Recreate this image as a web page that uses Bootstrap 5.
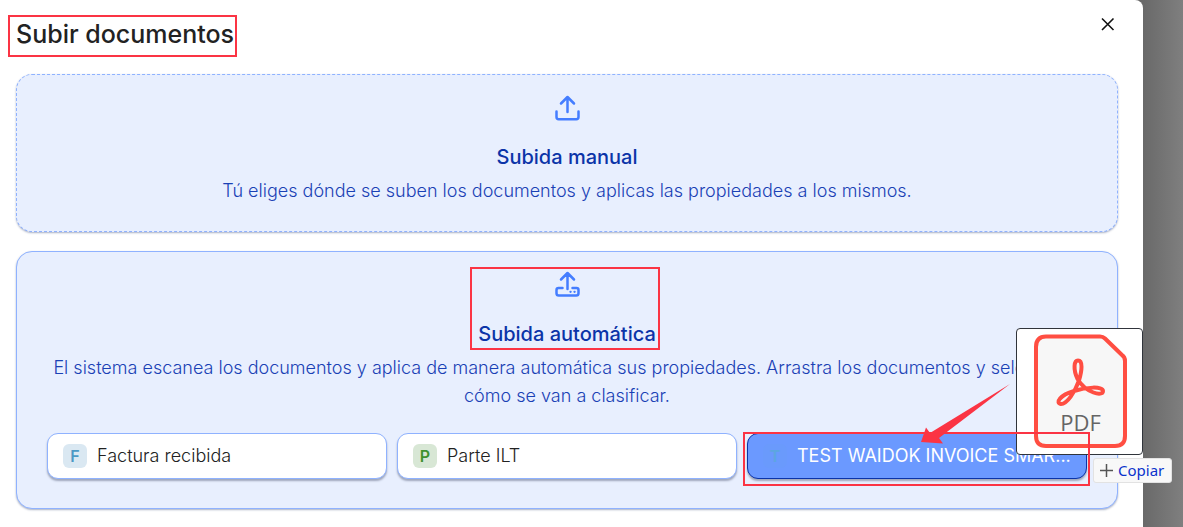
<!DOCTYPE html>
<html lang="es">
<head>
<meta charset="utf-8">
<meta name="viewport" content="width=device-width, initial-scale=1">
<title>Subir documentos</title>
<link href="https://cdn.jsdelivr.net/npm/bootstrap@5.3.0/dist/css/bootstrap.min.css" rel="stylesheet">
<style>
body { font-family: Inter, "Liberation Sans", sans-serif; background: #7e7e7e; color: #222; }
.backdrop-area { padding-right: 40px; background: linear-gradient(to left, #7f7f7f, #696969 40px); }
.dialog { background: #fff; border-top-right-radius: 8px; padding: 15px 25px 18px 16px; }
.dialog-title { font-size: 25px; line-height: 38px; font-weight: 500; margin: 0; }
.close-btn { width: 20px; height: 20px; line-height: 0; color: #111; }
.panels { gap: 19px; margin-top: 21px; }
.drop-panel { background: #e8effe; border: 1px solid #8fb2ff; border-radius: 16px; padding: 16px 30px 26px; color: #1a41b5; font-weight: 300; font-size: 18px; line-height: 28px; box-shadow: 0 1px 2px rgba(40,60,110,.4); text-align: center; }
.drop-panel.manual { border-style: dashed; }
.drop-panel.automatic { padding-bottom: 29px; }
.drop-panel h2 { font-size: 20px; line-height: 28px; font-weight: 500; color: #0b34a8; margin: 20px 0 6px; }
.drop-panel p { margin: 0; }
.panel-icon { display: block; margin: 0 auto; color: #447dff; }
.type-grid { gap: 10px; margin-top: 23px; }
.type-cell { flex: 1 1 0; min-width: 0; position: relative; }
.type-btn { width: 100%; height: 46px; background: #fff; border: 1px solid #8fb2ff; border-radius: 11px; padding: 0 15px; font-size: 18px; font-weight: 300; color: #222; box-shadow: 0 2px 2px rgba(50,60,90,.4); text-align: left; }
.type-btn.selected { background: #6b99ff; border-color: #0b34a8; color: #fff; font-weight: 400; }
.letter { flex: none; width: 24px; height: 24px; border-radius: 6px; line-height: 25px; font-size: 16px; font-weight: 600; text-align: center; margin-right: 10px; }
.letter-f { background: #dae8f2; color: #4b99c5; }
.letter-p { background: #d8e7d5; color: #40922f; }
.letter-t { background: #6a9afc; color: #5ca6e0; }
.red-frame { position: absolute; border: 2px solid #fb3444; pointer-events: none; z-index: 4; }
.frame-title { inset: 0 -3px -4px -8px; }
.frame-auto { inset: -1px -4px 4px -8px; }
.frame-card { inset: -1px -3px -7px -4px; }
.drag-ghost { position: absolute; width: 127px; height: 127px; right: -56px; bottom: 24px; background: #fff; border: 1px solid #30343b; border-radius: 4px; z-index: 3; }
.copy-tip { position: absolute; left: calc(100% + 6px); top: 25px; width: 79px; height: 25px; background: #f8f8f8; border: 1px solid #e2e2e2; border-radius: 3px; color: #0b33cc; font: 15px/23px "Noto Sans", sans-serif; z-index: 3; padding-left: 5px; }
.pointer-arrow { position: absolute; right: 76px; top: -51px; z-index: 5; }
.pdf-word { font: 500 22px "Open Sans", sans-serif; fill: #656565; }
</style>
</head>
<body>
<div class="backdrop-area min-vh-100 d-flex">
  <main class="dialog flex-grow-1">
    <header class="d-flex justify-content-between align-items-start">
      <div class="position-relative"><h1 class="dialog-title">Subir documentos</h1><span class="red-frame frame-title"></span></div>
      <button type="button" class="close-btn border-0 bg-transparent p-0" aria-label="Cerrar">
        <svg width="20" height="20" viewBox="0 0 20 20" fill="none" stroke="currentColor" stroke-width="1.6"><path d="M4 3.5 15.5 15M15.5 3.5 4 15"/></svg>
      </button>
    </header>

    <div class="panels d-grid">
      <section class="drop-panel manual">
        <svg class="panel-icon" width="32" height="32" viewBox="0 0 32 32" fill="none" stroke="currentColor" stroke-width="2.5" stroke-linecap="round" stroke-linejoin="round"><path d="M16.500 21V7M10 12.500 16.500 6l6.500 6.500M5.500 20.500V26q0 2.200 2.200 2.200h17.600q2.200 0 2.200-2.200v-5.500"/></svg>
        <h2>Subida manual</h2>
        <p>Tú eliges dónde se suben los documentos y aplicas las propiedades a los mismos.</p>
      </section>

      <section class="drop-panel automatic">
        <div class="d-inline-block position-relative">
          <svg class="panel-icon" width="32" height="32" viewBox="0 0 32 32" fill="none" stroke="currentColor" stroke-width="2.5" stroke-linecap="round" stroke-linejoin="round"><path d="M16.500 21V6M10 11.500 16.500 5l6.500 6.500M11.500 20H7.500q-2 0-2 2v3.200q0 2.300 2.300 2.300h17.400q2.300 0 2.300-2.300V22q0-2-2-2h-4"/><path d="M19.500 23.800h.1M23.500 23.800h.1" stroke-width="2.300"/></svg>
          <h2>Subida automática</h2>
          <span class="red-frame frame-auto"></span>
        </div>
        <p>El sistema escanea los documentos y aplica de manera automática sus propiedades. Arrastra los documentos y selecciona cómo se van a clasificar.</p>
        <div class="type-grid d-flex">
          <div class="type-cell"><button type="button" class="type-btn d-flex align-items-center"><span class="letter letter-f">F</span><span class="text-truncate">Factura recibida</span></button></div>
          <div class="type-cell"><button type="button" class="type-btn d-flex align-items-center"><span class="letter letter-p">P</span><span class="text-truncate">Parte ILT</span></button></div>
          <div class="type-cell">
            <button type="button" class="type-btn selected d-flex align-items-center"><span class="letter letter-t">T</span><span class="text-nowrap">TEST WAIDOK INVOICE SMAR...</span></button>
            <span class="red-frame frame-card"></span>
            <svg class="pointer-arrow" width="92" height="64" viewBox="0 0 92 64"><path fill="#fb3444" d="M91 2 20 56 24 61.500 2 60 7 45.500 11 51Z"/></svg>
            <div class="drag-ghost">
              <svg width="125" height="125" viewBox="0 0 125 125">
                <path d="M29 7.500H83q3 0 5 2L105 26q3 2 3 6V107q0 10-10 10H29q-10 0-10-10V18q0-10.500 10-10.500Z" fill="#f7f7f7" stroke="#ff4e42" stroke-width="4" stroke-linejoin="round"/>
                <path d="M60.500 50C56 40 57 31.500 61 31.500c5 0 4 10 1 20C58 63 50 75 44 75c-6-1-1-9 13-13 12-4 29-5 29 0 0 6-17 2-25.500-12Z" fill="none" stroke="#ff4e42" stroke-width="4" stroke-linejoin="round"/>
                <text class="pdf-word" x="63.500" y="102" text-anchor="middle">PDF</text>
              </svg>
            </div>
            <div class="copy-tip d-flex align-items-center">
              <svg class="me-1" width="15" height="15" viewBox="0 0 15 15" stroke="#555" stroke-width="1.5"><path d="M1 7.500h13M7.500 1v13"/></svg><span>Copiar</span>
            </div>
          </div>
        </div>
      </section>
    </div>
  </main>
</div>
<script src="https://cdn.jsdelivr.net/npm/bootstrap@5.3.0/dist/js/bootstrap.bundle.min.js"></script>
</body>
</html>
